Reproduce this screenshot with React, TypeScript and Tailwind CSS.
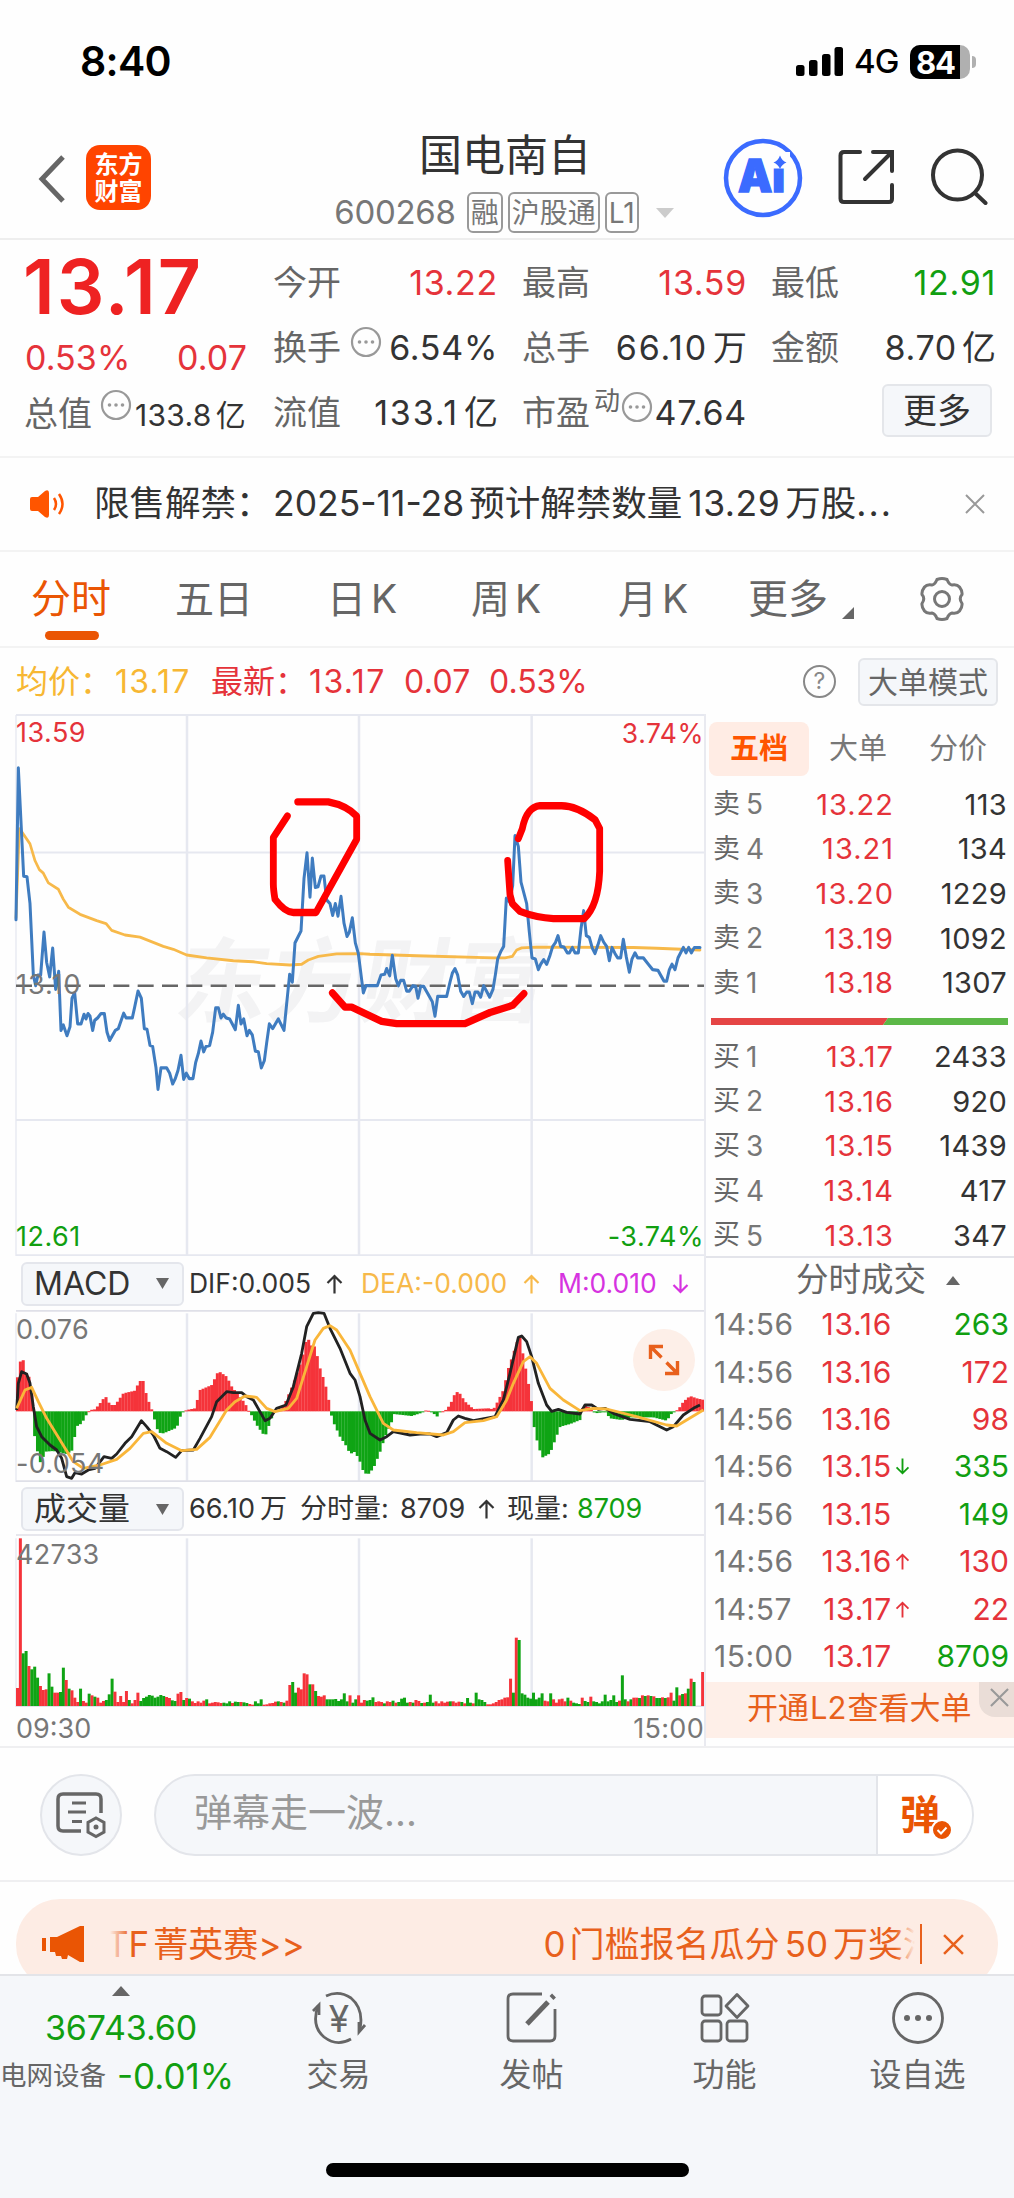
import React from "react";
import clsx from "clsx";

const RED = "#f5333a";
const GREEN = "#0fa414";

// [label, price, volume]
const sells = [
  ["5", "13.22", "113"],
  ["4", "13.21", "134"],
  ["3", "13.20", "1229"],
  ["2", "13.19", "1092"],
  ["1", "13.18", "1307"],
];

const buys = [
  ["1", "13.17", "2433"],
  ["2", "13.16", "920"],
  ["3", "13.15", "1439"],
  ["4", "13.14", "417"],
  ["5", "13.13", "347"],
];

const trades = [
  { time: "14:56", price: "13.16", vol: "263", up: false },
  { time: "14:56", price: "13.16", vol: "172", up: true },
  { time: "14:56", price: "13.16", vol: "98", up: true },
  { time: "14:56", price: "13.15", vol: "335", up: false, dir: "down" },
  { time: "14:56", price: "13.15", vol: "149", up: false },
  { time: "14:56", price: "13.16", vol: "130", up: true, dir: "up" },
  { time: "14:57", price: "13.17", vol: "22", up: true, dir: "up" },
  { time: "15:00", price: "13.17", vol: "8709", up: false },
];

const priceLine =
  "48,615 55,190 71,493 81,495 90,570 100,770 107,800 114,770 122,770 132,650 140,735 149,775 158,695 167,810 176,760 183,925 190,910 201,940 210,915 216,835 224,820 233,907 243,907 252,880 258,893 264,878 270,885 278,925 284,897 293,890 303,878 313,878 321,930 329,953 346,925 355,920 371,877 378,890 397,890 404,860 414,815 424,835 433,920 441,922 450,967 458,970 468,1030 474,1090 483,1030 500,1030 509,1045 518,1075 526,1060 534,1037 543,995 551,1062 559,1045 568,1060 579,1060 587,1015 595,990 603,955 611,985 618,970 629,967 638,930 647,862 655,862 663,890 670,880 678,890 689,893 706,923 715,855 723,907 731,893 741,940 748,925 757,938 766,983 775,985 784,1030 793,1010 800,960 808,907 818,920 835,893 852,925 860,850 869,768 877,790 885,680 903,647 912,500 921,428 930,552 937,443 946,525 954,523 963,493 972,493 980,560 990,570 998,603 1006,570 1014,605 1023,550 1032,625 1041,662 1048,650 1057,610 1066,680 1075,710 1090,820 1098,800 1132,800 1143,770 1154,768 1160,752 1169,772 1177,715 1187,780 1195,800 1202,785 1211,785 1220,815 1228,815 1239,800 1247,802 1254,835 1262,802 1271,802 1288,830 1297,845 1305,885 1313,830 1340,830 1350,790 1357,765 1365,752 1373,770 1382,815 1391,830 1400,818 1408,818 1417,850 1425,818 1434,818 1442,832 1451,800 1469,832 1479,810 1486,770 1493,725 1502,705 1511,690 1519,555 1528,565 1538,520 1545,380 1555,410 1563,510 1580,570 1588,650 1596,722 1606,725 1615,755 1622,740 1631,727 1640,740 1650,715 1658,690 1666,680 1674,660 1682,690 1692,692 1702,708 1708,708 1717,693 1725,708 1735,708 1743,640 1751,590 1759,660 1768,665 1777,695 1785,710 1794,685 1802,660 1811,678 1820,690 1828,730 1836,693 1845,710 1853,722 1862,722 1870,670 1879,720 1888,762 1896,725 1905,708 1913,722 1930,722 1945,740 1958,755 1974,757 1992,787 2000,787 2008,755 2016,740 2025,755 2034,722 2050,693 2058,708 2066,693 2074,708 2083,693 2100,693";

const avgLine =
  "48,610 58,360 66,370 90,403 105,450 118,475 130,485 145,512 175,530 190,558 205,580 240,600 290,618 318,626 335,645 375,658 420,664 490,690 520,698 560,714 620,722 700,730 760,733 800,738 870,742 905,740 925,728 955,718 1010,711 1080,710 1110,712 1250,716 1480,722 1515,722 1537,718 1550,700 1565,694 1610,692 1900,693 1970,695 2100,700";

const difLine =
  "50,480 55,400 65,365 80,372 90,400 100,470 110,530 125,560 150,585 170,600 185,625 200,680 215,685 225,668 245,672 265,660 285,655 312,620 335,625 350,612 375,580 395,560 424,512 440,530 460,555 480,595 500,605 527,622 545,602 580,600 600,565 635,500 650,455 680,425 700,428 725,428 740,440 760,450 795,512 810,505 830,475 858,465 880,410 905,310 920,230 940,190 955,188 972,190 990,235 1020,295 1050,370 1065,390 1080,440 1095,510 1110,550 1140,570 1160,560 1180,545 1230,555 1260,552 1290,552 1310,560 1340,548 1360,510 1375,498 1395,505 1420,512 1485,500 1510,450 1530,370 1555,262 1565,258 1580,275 1595,320 1615,400 1640,465 1655,484 1675,478 1700,487 1740,492 1755,465 1775,465 1795,478 1815,475 1840,490 1890,508 1950,515 2000,540 2020,530 2050,495 2080,475 2100,465";

const deaLine =
  "50,475 75,420 95,412 115,455 140,505 180,570 220,635 250,655 300,645 350,628 390,595 430,550 455,545 500,580 545,602 590,598 630,562 680,480 705,455 735,438 770,442 800,475 825,485 865,475 890,445 920,350 945,270 970,235 990,227 1010,240 1050,300 1080,370 1110,440 1150,520 1180,540 1250,548 1330,555 1360,545 1395,518 1450,512 1490,500 1520,450 1540,400 1570,335 1590,320 1610,340 1650,415 1690,450 1740,482 1780,475 1820,477 1910,500 2000,525 2030,528 2060,510 2110,480";

const macdShape =
  "48,440 55,345 68,322 75,365 90,385 97,450 99,484 100,540 110,590 118,640 126,630 135,605 160,603 200,612 218,600 228,530 245,520 262,488 270,480 285,478 300,460 316,438 330,465 345,465 370,430 405,422 418,393 430,393 440,440 454,475 458,490 475,548 490,550 530,533 543,492 552,484 560,480 585,475 600,420 635,405 655,363 680,380 695,410 735,460 744,480 750,487 770,525 795,560 812,510 825,484 850,470 880,400 905,330 922,255 930,285 945,290 960,355 975,400 985,445 991,480 997,510 1020,560 1040,590 1050,612 1065,605 1080,635 1092,670 1105,672 1120,655 1140,605 1155,560 1175,515 1180,492 1235,498 1260,490 1272,484 1280,480 1290,484 1300,490 1312,500 1320,486 1335,482 1350,465 1365,430 1375,424 1395,455 1420,477 1465,475 1480,478 1490,460 1510,420 1525,355 1540,310 1558,255 1570,320 1585,400 1595,460 1597,484 1600,520 1615,590 1628,622 1650,610 1665,570 1680,530 1710,522 1740,510 1744,486 1750,468 1762,468 1775,480 1785,490 1800,488 1815,484 1830,505 1865,510 1890,502 1960,502 2000,512 2015,490 2035,478 2050,455 2070,438 2090,445 2112,450";

const volBars =
  "r54 r503 g158 g165 r120 g110 g118 g85 r60 r48 r50 g98 g58 r40 r40 g42 g115 r78 g52 r47 r25 r12 g52 r15 r10 g37 r32 g28 r25 r10 r15 g18 g35 g82 r43 r12 r30 r12 r45 g18 r8 r18 r40 g15 g24 g28 g33 g31 g25 g28 g33 g30 r27 r24 g17 g15 r37 r42 g18 r24 g22 r14 r9 r14 r10 r16 g20 r8 r10 r12 r11 r9 g10 g8 g14 r9 g13 g12 r12 g11 g9 r6 r4 g14 g8 g20 r4 r5 r8 r9 r13 g14 r12 g10 r16 r63 g72 g40 r55 r50 r98 r95 g65 r65 g45 r30 r28 r32 g20 g20 g20 g21 g15 g20 g38 g14 r32 g10 g20 r32 r10 r18 g16 g18 g26 r12 r14 r12 g8 r14 r12 g16 r10 g12 g22 g25 g10 r12 g10 r18 r15 g9 r10 g12 g34 g10 r14 r8 r14 r10 r13 g14 r14 r10 r13 g12 r8 g24 g10 r8 g40 g20 g18 g12 r5 r5 r8 r12 r18 r20 r25 r26 r82 g40 r205 g198 g38 g34 g25 g22 g40 g20 g25 g38 r16 r14 g38 r20 r10 r20 r22 r14 g25 r16 g10 g8 g6 r25 g15 g12 r28 g14 g12 g8 g14 g34 g14 g18 g32 g12 r16 g92 g20 r14 g20 r25 r25 g24 r32 g30 r32 g30 r29 g24 g24 r26 g24 r26 r40 g16 g56 r32 g36 r38 g52 r82 g72 r0 r0 r102".split(
    " "
  );

// linear interpolation over a list of "x,y" pairs
const parse = (s: string) => s.split(" ").map((p) => p.split(",").map(Number));
const macdPts = parse(macdShape);
const valueAt = (x: number) => {
  for (let i = 1; i < macdPts.length; i++) {
    const [x0, y0] = macdPts[i - 1];
    const [x1, y1] = macdPts[i];
    if (x <= x1) return y0 + ((y1 - y0) * (x - x0)) / (x1 - x0);
  }
  return 484;
};

const STEP = 2064 / 241;
const VOL_STEP = 2064 / volBars.length;

const Triangle = ({ className, d = "M0 0H10L5 10Z" }: { className: string; d?: string }) => (
  <svg viewBox="0 0 10 10" preserveAspectRatio="none" className={className} fill="currentColor">
    <path d={d} />
  </svg>
);

const Arrow = ({ dir, className }: { dir?: string; className?: string }) => (
  <svg
    viewBox="0 0 16 20"
    className={clsx("shrink-0", dir === "down" && "rotate-180", className)}
    fill="none"
    stroke="currentColor"
    strokeWidth="2.2"
  >
    <path d="M8 19.5V2M1 9l7-7 7 7" />
  </svg>
);

const Dots = ({ className }: { className?: string }) => (
  <svg viewBox="0 0 32 32" className={clsx("h-8 w-8 shrink-0 text-[#999]", className)}>
    <circle cx="16" cy="16" r="14" fill="none" stroke="currentColor" strokeWidth="2.2" />
    <circle cx="9.5" cy="16" r="1.8" fill="currentColor" />
    <circle cx="16" cy="16" r="1.8" fill="currentColor" />
    <circle cx="22.5" cy="16" r="1.8" fill="currentColor" />
  </svg>
);

const Cross = ({ className, w = 2 }: { className: string; w?: number }) => (
  <svg viewBox="0 0 20 20" className={className} fill="none" stroke="currentColor" strokeWidth={w}>
    <path d="M1 1l18 18M19 1L1 19" />
  </svg>
);

const StatusBar = () => (
  <div className="flex h-[124px] items-center justify-between pl-[80px] pr-[38px] text-black">
    <span className="text-[41px] font-semibold tracking-[-0.7px]">8:40</span>
    <div className="flex items-center">
      <svg width="48" height="30" viewBox="0 0 48 30">
        <rect x="0" y="18" width="8.5" height="11" rx="2.5" />
        <rect x="13" y="13" width="8.5" height="16" rx="2.5" />
        <rect x="26" y="7" width="8.5" height="22" rx="2.5" />
        <rect x="38.5" y="0" width="8.5" height="29" rx="2.5" />
      </svg>
      <span className="ml-[10px] w-[45px] text-[33px] font-medium tracking-[-0.8px]">4G</span>
      <div className="ml-[11px] flex h-[34px] w-[60px] rounded-[10px] bg-[#b0b0b0]">
        <div className="flex w-[50px] items-center justify-center rounded-l-[10px] bg-black pl-px text-[31px] font-bold leading-none tracking-[-1px] text-white">
          84
        </div>
      </div>
      <div className="ml-[2px] h-3 w-[4px] rounded-r-full bg-[#b0b0b0]" />
    </div>
  </div>
);

const Tag = ({ children }: { children: React.ReactNode }) => (
  <span className="flex h-[41px] items-center rounded-md border-2 border-[#999] px-[2px] text-[28px] text-[#777]">
    {children}
  </span>
);

const Header = () => (
  <div className="flex h-[116px] border-b-2 border-[#eee]">
    <div className="flex w-[330px] items-start pl-[37px] pt-[21px]">
      <svg width="28" height="48" viewBox="0 0 28 48" className="mt-[10px]" fill="none" stroke="#666" strokeWidth="5">
        <path d="M26 2L5 24l21 22" />
      </svg>
      <div className="ml-[21px] flex h-[65px] w-[65px] flex-col items-center justify-center rounded-[14px] bg-[#ff4400] text-[24px] font-bold leading-[27px] text-white">
        <span>东方</span>
        <span>财富</span>
      </div>
    </div>
    <div className="flex w-[350px] flex-col items-center">
      <div className="mt-[8px] text-[43px] leading-[46px] text-[#333]">国电南自</div>
      <div className="mt-[10px] -ml-[2px] flex items-center gap-[5px]">
        <span className="mr-[6px] text-[33px] tracking-[-0.3px] text-[#777]">600268</span>
        <Tag>融</Tag>
        <Tag>沪股通</Tag>
        <Tag>L1</Tag>
        <Triangle className="ml-3 h-[10px] w-[18px] text-[#ccc]" />
      </div>
    </div>
    <div className="ml-[43px] flex items-start pt-[14px]">
      <svg width="80" height="80" viewBox="0 0 80 80" fill="#3b6bff">
        <circle cx="40" cy="40" r="37" fill="none" stroke="#3b6bff" strokeWidth="4.5" />
        <text
          x="15"
          y="54"
          fontSize="46"
          textLength="47"
          lengthAdjust="spacingAndGlyphs"
          stroke="#3b6bff"
          strokeWidth="1.5"
          className="font-black"
        >
          Ai
        </text>
        <rect x="47" y="14" width="20" height="16.500" fill="#fefefe" />
        <path d="M57 17.500Q59 23 63.500 24.500Q59 26 57 31Q55 26 50.500 24.500Q55 23 57 17.500Z" />
      </svg>
      <svg
        width="58"
        height="58"
        viewBox="0 0 58 58"
        className="ml-[34px] mt-[10px]"
        fill="none"
        stroke="#333"
        strokeWidth="4"
        strokeLinecap="round"
      >
        <path d="M23 4H7Q3.500 4 3.500 7.500V50.500Q3.500 54 7 54H52Q55 54 55 51V37M36 4H55V23M54 5L28 31" />
      </svg>
      <svg
        width="60"
        height="60"
        viewBox="0 0 60 60"
        className="ml-[33px] mt-[10px]"
        fill="none"
        stroke="#333"
        strokeWidth="4"
        strokeLinecap="round"
      >
        <circle cx="29.500" cy="27" r="24.500" />
        <path d="M47 45L57.500 55" />
      </svg>
    </div>
  </div>
);

type CellProps = {
  label: React.ReactNode;
  value: string;
  unit?: string;
  color?: string;
  wide?: boolean;
};

const Cell = ({ label, value, unit, color, wide }: CellProps) => (
  <div className="flex h-[65px] items-center justify-between whitespace-nowrap text-[34px]">
    <span className="-ml-[2px] flex items-center text-[#666]">{label}</span>
    <span className={clsx("-mr-px", color || "text-[#333]")}>
      <span className={wide ? "tracking-[1.8px]" : "tracking-[0.7px]"}>{value}</span>
      {unit && <span className="ml-[5px]">{unit}</span>}
    </span>
  </div>
);

const Quote = () => (
  <div className="flex h-[218px] gap-[28px] border-b-2 border-[#f3f3f3] pl-[25px] pt-[10px]">
    <div className="w-[222px]">
      <div className="-ml-[2px] flex h-[75px] items-center text-[75px] font-semibold tracking-[2px] text-[#ee2222]">
        13.17
      </div>
      <div className="flex h-[64px] items-center justify-between text-[34px] tracking-[0.1px] text-[#e5333a]">
        <span>0.53%</span>
        <span>0.07</span>
      </div>
      <div className="flex h-[48px] items-center whitespace-nowrap">
        <span className="-ml-px shrink-0 text-[34px] text-[#666]">总值</span>
        <Dots className="-mt-4 ml-[8px]" />
        <span className="ml-[3px] mt-1 text-[30px] tracking-[0.3px] text-[#333]">
          133.8<span className="ml-[4px]">亿</span>
        </span>
      </div>
    </div>
    <div className="grid w-[720px] grid-cols-[222px_222px_222px] content-start gap-x-[27px]">
      <Cell label="今开" value="13.22" color="text-[#e5333a]" />
      <Cell label="最高" value="13.59" color="text-[#e5333a]" />
      <Cell label="最低" value="12.91" color="text-[#119f11]" />
      <Cell
        label={
          <>
            换手
            <Dots className="-mt-3 ml-[9px]" />
          </>
        }
        value="6.54%"
      />
      <Cell label="总手" value="66.10" unit="万" wide />
      <Cell label="金额" value="8.70" unit="亿" />
      <Cell label="流值" value="133.1" unit="亿" wide />
      <Cell
        label={
          <>
            市盈
            <span className="-mt-6 ml-[4px] text-[26px]">动</span>
            <Dots className="-mt-3 ml-px" />
          </>
        }
        value="47.64"
      />
      <div className="flex h-[65px] items-center justify-end pr-[3px]">
        <button className="-mt-1 h-[53px] w-[110px] rounded-md border-2 border-[#e4e6ea] bg-[#f5f7fa] text-[34px] leading-none text-[#333]">
          更多
        </button>
      </div>
    </div>
  </div>
);

const Notice = () => (
  <div className="flex h-[94px] items-center border-b-2 border-[#f3f3f3] pl-[29px]">
    <svg width="38" height="30" viewBox="0 0 38 30" fill="#ff5500">
      <path d="M3 8H9L16 2Q20 0 20 4V26Q20 30 16 28L9 22H3Q1 22 1 20V10Q1 8 3 8Z" />
      <path d="M25 9Q29 15 25 21M30 5Q37 15 30 25" fill="none" stroke="#ff5500" strokeWidth="2.500" />
    </svg>
    <div className="ml-[27px] flex w-[801px] whitespace-nowrap text-[35.5px] text-[#333]">
      <span className="w-[179px]">限售解禁：</span>
      <span>2025-11-28</span>
      <span className="ml-[5px]">预计解禁数量</span>
      <span className="ml-[6px] tracking-[0.5px]">13.29</span>
      <span className="ml-[5px]">万股</span>
      <span className="tracking-[2px]">...</span>
    </div>
    <Cross className="ml-[70px] h-5 w-5 text-[#999]" />
  </div>
);

const Tabs = () => (
  <div className="flex h-[96px] items-center border-b-2 border-[#f3f3f3] text-[39px] text-[#666]">
    <div className="relative w-[145px] pl-[31px] text-[40px] text-[#ea5504]">
      分时
      <div className="absolute -bottom-[11px] left-[45px] h-[9px] w-[54px] rounded-full bg-[#ea5504]" />
    </div>
    <div className="w-[152px] pl-[30px]">五日</div>
    <div className="w-[142px] pl-[30px]">
      日<span className="ml-[5px]">K</span>
    </div>
    <div className="w-[148px] pl-[32px]">
      周<span className="ml-[5px]">K</span>
    </div>
    <div className="w-[130px] pl-[31px]">
      月<span className="ml-[5px]">K</span>
    </div>
    <div className="flex w-[202px] items-center pl-[31px] text-[40px]">
      更多
      <Triangle className="ml-[14px] mt-7 h-3 w-3" d="M10 0V10H0Z" />
    </div>
    <svg width="46" height="46" viewBox="0 0 46 46" fill="none" stroke="#777" strokeWidth="3">
      <path d="M18 3.500Q23 1.500 28 3.500Q30 8.500 33 9Q38 8 40.500 11Q43.500 15 43 18.500Q39.500 22.500 43 27.500Q43.500 31 40.500 35Q38 38 33 37Q30 37.500 28 42.500Q23 44.500 18 42.500Q16 37.500 13 37Q8 38 5.500 35Q2.500 31 3 27.500Q6.500 22.500 3 18.500Q2.500 15 5.500 11Q8 8 13 9Q16 8.500 18 3.500Z" />
      <circle cx="23" cy="23" r="7.500" />
    </svg>
  </div>
);

const InfoLine = () => (
  <div className="flex h-[66px] items-center whitespace-nowrap pl-4 pr-4 pt-px text-[32px] text-[#e5333a]">
    <span className="w-[99px] text-[#f7b733]">均价：</span>
    <span className="w-[96px] tracking-[1.2px] text-[#f7b733]">13.17</span>
    <span className="w-[98px]">最新：</span>
    <span className="w-[95px] tracking-[1.4px]">13.17</span>
    <span className="w-[85px] tracking-[0.3px]">0.07</span>
    <span>0.53%</span>
    <div className="ml-auto mr-[22px] flex h-[33px] w-[33px] items-center justify-center rounded-full border-2 border-[#888] text-[23px] text-[#888]">
      ?
    </div>
    <button className="h-[48px] w-[140px] rounded-md border-2 border-[#e4e6ea] bg-[#f5f7fa] text-[30px] leading-none text-[#666]">
      大单模式
    </button>
  </div>
);

const Grid = ({ top, bottom }: { top: number; bottom: number }) => (
  <g stroke="#e6e8f0" fill="none">
    {[561, 1077, 1595].map((x) => (
      <path key={x} d={`M${x} ${top}V${bottom}`} strokeWidth="7.5" />
    ))}
    <path d={`M48 ${top}V${bottom}`} strokeWidth="4" />
  </g>
);

const PriceChart = () => (
  <div className="relative h-[542px] text-[27px] tracking-[0.5px]">
    <div className="absolute left-[178px] top-[222px] -skew-x-10 text-[92px] font-bold leading-none text-[#f3f3f4]">
      东方财富
    </div>
    <svg viewBox="0 39.2 2112 1517.6" preserveAspectRatio="none" className="relative h-full w-full" fill="none">
      <Grid top={42} bottom={1557} />
      <path d="M48 427H2112M48 1176H2112" stroke="#e6e8f0" strokeWidth="6" />
      <path d="M48 42H2112M48 1555H2112" stroke="#e6e8f0" strokeWidth="6" />
      <path d="M48 800H2112" stroke="#666" strokeWidth="7" strokeDasharray="48 25" />
      <g strokeLinejoin="round" strokeLinecap="round">
        <polyline points={avgLine} stroke="#f7b94a" strokeWidth="8" />
        <polyline points={priceLine} stroke="#3f7cc0" strokeWidth="9" />
        <g stroke="#ff0000" strokeWidth="20.500">
          <path d="M893 285H985Q1040 295 1070 325V390L948 595H880Q855 595 825 558Q820 530 820 515V385L862 325" />
          <path d="M1555 388L1567 360Q1580 300 1620 296H1685Q1730 296 1785 335L1799 360V480Q1795 575 1753 612H1660Q1610 610 1560 592L1537 570L1530 545L1523 450" />
          <path d="M997 820L1035 860H1055Q1100 880 1145 900L1190 906H1395L1470 875L1538 855L1572 822" />
        </g>
      </g>
    </svg>
    <span className="absolute left-4 top-0 leading-[38px] text-[#e5333a]">13.59</span>
    <span className="absolute right-0 top-0 text-[26.5px] leading-[38px] text-[#e5333a]">3.74%</span>
    <span className="absolute left-4 top-[251px] tracking-[1px] text-[#777]">13.10</span>
    <span className="absolute -bottom-px left-4 text-[#119f11]">12.61</span>
    <span className="absolute -bottom-px right-0 text-[#119f11]">-3.74%</span>
  </div>
);

const SelectBox = ({ children }: { children: React.ReactNode }) => (
  <div className="flex h-[44px] w-[163px] shrink-0 items-center justify-between rounded-md border-2 border-[#e4e6ec] bg-[#f5f7fa] pl-[11px] pr-[13px] text-[32px] leading-none text-[#333]">
    {children}
    <Triangle className="h-[11px] w-[13px] text-[#666]" />
  </div>
);

const MacdChart = () => (
  <>
    <div className="flex h-[54px] items-center whitespace-nowrap pl-[21px] pt-px text-[26.5px] text-[#333]">
      <SelectBox>MACD</SelectBox>
      <span className="ml-[5px] w-[137px]">DIF:0.005</span>
      <Arrow className="h-[20px] w-[17px]" />
      <span className="ml-[18px] w-[162px] text-[#f7b94a]">DEA:-0.000</span>
      <Arrow className="h-[20px] w-[17px] text-[#f7b94a]" />
      <span className="ml-[18px] w-[114px] text-[#d633e0]">M:0.010</span>
      <Arrow dir="down" className="h-[20px] w-[17px] text-[#d633e0]" />
    </div>
    <div className="relative h-[172px] text-[27px] tracking-[0.3px] text-[#777]">
      <svg viewBox="0 180 2112 516" preserveAspectRatio="none" className="h-full w-full" fill="none">
        <Grid top={190} bottom={696} />
        <path d="M48 182H2112M48 694H2112" stroke="#dfe0e8" strokeWidth="6" />
        {Array.from({ length: 241 }, (_, i) => {
          const x = 48 + i * STEP;
          const y = valueAt(x + STEP / 2);
          const up = y < 484;
          return (
            <rect
              key={i}
              x={x}
              y={up ? y : 484}
              width={STEP + 0.6}
              height={Math.max(Math.abs(y - 484), 3)}
              fill={up ? RED : GREEN}
            />
          );
        })}
        <polyline points={difLine} stroke="#222" strokeWidth="8.5" strokeLinejoin="round" />
        <polyline points={deaLine} stroke="#f9b63a" strokeWidth="8.5" strokeLinejoin="round" />
      </svg>
      <span className="absolute left-4 top-0">0.076</span>
      <span className="absolute bottom-[-2px] left-4">-0.054</span>
      <div className="absolute right-[9px] top-[19px] flex h-[62px] w-[62px] items-center justify-center rounded-full bg-[#fdefe8]">
        <svg width="34" height="34" viewBox="0 0 34 34" fill="none" stroke="#e8601c" strokeWidth="3.4">
          <path d="M3.500 16V3.500H16M3.500 3.500L14.500 14.500M30.500 18V30.500H18M30.500 30.500L19.500 19.500" />
        </svg>
      </div>
    </div>
  </>
);

const VolumeChart = () => (
  <>
    <div className="flex h-[52px] items-center whitespace-nowrap pl-[21px] pt-[2px] text-[27px] text-[#333]">
      <SelectBox>成交量</SelectBox>
      <span className="ml-[5px] w-[111px]">
        66.10<span className="ml-[5px]">万</span>
      </span>
      <span className="w-[100px]">分时量:</span>
      <span className="w-[78px]">8709</span>
      <Arrow className="h-[20px] w-[17px]" />
      <span className="ml-[12px] w-[70px]">现量:</span>
      <span className="text-[#119f11]">8709</span>
    </div>
    <div className="relative h-[173px] text-[27px] tracking-[0.3px] text-[#777]">
      <svg viewBox="0 852 2112 519" preserveAspectRatio="none" className="h-full w-full" fill="none">
        <Grid top={865} bottom={1371} />
        <path d="M48 855H2112M48 1369H2112" stroke="#dfe0e8" strokeWidth="5" />
        {volBars.map((bar, i) => {
          const h = Number(bar.slice(1));
          return (
            <rect
              key={i}
              x={48 + i * VOL_STEP}
              y={1368 - h}
              width={VOL_STEP + 0.4}
              height={h}
              fill={bar[0] === "r" ? RED : GREEN}
            />
          );
        })}
      </svg>
      <span className="absolute left-4 top-px">42733</span>
    </div>
    <div className="flex h-[39px] items-center justify-between pl-4 pt-[6px] text-[27px] text-[#777]">
      <span>09:30</span>
      <span className="tracking-[0.3px]">15:00</span>
    </div>
  </>
);

const Level = ({ side, row }: { side: string; row: string[] }) => (
  <div className="flex h-[44.7px] items-center text-[29px]">
    <span className="w-[33px] text-[27px] text-[#666]">{side}</span>
    <span className="text-[28px] text-[#777]">{row[0]}</span>
    <span className="ml-auto tracking-[1px] text-[#e5333a]">{row[1]}</span>
    <span className="w-[113px] text-right tracking-[0.3px] text-[#333]">{row[2]}</span>
  </div>
);

const OrderBook = () => (
  <div className="w-[310px] border-l-2 border-[#e9eaf0]">
    <div className="flex h-[64px] items-center pl-[3px] pt-[5px] text-[29px] text-[#777]">
      <div className="flex h-[54px] w-[100px] items-center justify-center rounded-lg bg-[#ffece4] font-bold text-[#ff5500]">
        五档
      </div>
      <span className="ml-[20px]">大单</span>
      <span className="ml-[42px]">分价</span>
    </div>
    <div className="h-[480px] border-b-2 border-[#e3e4ea] pl-[7px] pr-[7px] pt-[4px]">
      {sells.map((row) => (
        <Level key={row[0]} side="卖" row={row} />
      ))}
      <div className="-ml-[2px] -mr-[2px] mb-[9px] mt-[13px]">
        <svg width="297" height="7" viewBox="0 0 297 7">
          <path d="M0 0H177L172 7H0Z" fill="#e54545" />
          <path d="M177 0H297V7H172Z" fill="#5cb848" />
        </svg>
      </div>
      {buys.map((row) => (
        <Level key={row[0]} side="买" row={row} />
      ))}
    </div>
    <div className="flex h-[43px] items-center pl-[90px] pt-[2px] text-[32.5px] text-[#666]">
      分时成交
      <Triangle className="ml-[20px] h-[9px] w-[14px]" d="M5 0L10 10H0Z" />
    </div>
    <div className="h-[381px] pl-[8px] pr-[5px]">
      {trades.map((t, i) => (
        <div key={i} className="flex h-[47.4px] items-center text-[30px]">
          <span className="w-[100px] tracking-[0.5px] text-[#777]">{t.time}</span>
          <span className="w-[78px] whitespace-nowrap text-right tracking-[0.7px] text-[#e5333a]">{t.price}</span>
          <span className="flex w-[18px] justify-end">
            {t.dir && (
              <Arrow
                dir={t.dir}
                className={clsx("h-[17px] w-[15px]", t.dir === "up" ? "text-[#e5333a]" : "text-[#119f11]")}
              />
            )}
          </span>
          <span className={clsx("ml-auto", t.up ? "text-[#e5333a]" : "text-[#119f11]")}>{t.vol}</span>
        </div>
      ))}
    </div>
    <div className="relative flex h-[56px] items-center whitespace-nowrap bg-[#feefe8] pb-1 pl-[41px] text-[31px] text-[#e8601c]">
      开通<span className="mx-px">L2</span>查看大单
      <div className="absolute right-0 top-0 flex h-[35px] w-[35px] items-center justify-center rounded-bl-2xl bg-[#eaddd7]">
        <Cross className="mb-1 ml-[6px] h-[19px] w-[19px] text-[#999]" w={2.2} />
      </div>
    </div>
  </div>
);

const CommentBar = () => (
  <div className="flex h-[136px] items-center gap-[32px] border-y-2 border-[#efeff1] pl-[40px] pt-[2px]">
    <div className="flex h-[82px] w-[82px] items-center justify-center rounded-full border-2 border-[#e3e5ea] bg-[#f5f7fa]">
      <svg width="52" height="48" viewBox="0 0 52 48" fill="none" stroke="#666" strokeWidth="3">
        <path d="M26 40H8Q3 40 3 35V8Q3 3 8 3H41Q46 3 46 8V22" strokeWidth="3.500" />
        <path d="M17 12H31M13 21H31M17 30.500H27" />
        <path d="M41 27L49 31.500V41L41 45.500L33 41V31.500Z" />
        <circle cx="41" cy="36" r="2.500" fill="#666" stroke="none" />
      </svg>
    </div>
    <div className="flex h-[82px] w-[820px] overflow-hidden rounded-full border-2 border-[#e3e5ea] bg-[#f5f7fa]">
      <div className="flex flex-1 items-center pb-[6px] pl-[38px] text-[38px] text-[#999]">弹幕走一波...</div>
      <div className="relative flex w-[96px] items-center border-l-2 border-[#e3e5ea] bg-white pl-[22px] text-[40px] font-bold text-[#ea5504]">
        弹
        <svg width="22" height="22" viewBox="0 0 22 22" className="absolute left-[53px] top-[43px]">
          <circle cx="11" cy="11" r="10" fill="#ea5504" stroke="#fff" strokeWidth="2" />
          <path d="M6.500 11l3.500 3.500 5.500-6" fill="none" stroke="#fff" strokeWidth="2" />
        </svg>
      </div>
    </div>
  </div>
);

const Banner = () => (
  <div className="h-[92px] overflow-hidden px-4 pt-[17px]">
    <div className="flex h-[90px] items-center rounded-[44px] bg-[#fdece4] pl-[26px] text-[35px] text-[#e8601c]">
      <svg width="43" height="36" viewBox="0 0 43 36" fill="#ea5504">
        <path d="M0 12H4V25H0ZM8 11H15L38 0H42V36H38L26 29L25 33H20L19 30H14L13 26H8Z" />
      </svg>
      <div className="relative ml-[25px] flex w-[805px] justify-between overflow-hidden whitespace-nowrap">
        <span className="-ml-[4px]">
          TF<span className="ml-[4px]">菁英赛</span>&gt;&gt;
        </span>
        <span className="-mr-[23px]">
          0<span className="ml-[4px]">门槛报名瓜分</span>
          <span className="mx-[5px]">50</span>万奖池
        </span>
        <div className="absolute inset-y-0 left-0 w-5 bg-linear-to-r from-[#fdece4] to-[#fdece4]/0" />
        <div className="absolute inset-y-0 right-0 w-5 bg-linear-to-l from-[#fdece4] to-[#fdece4]/0" />
      </div>
      <div className="ml-[5px] h-[40px] w-[2px] bg-[#e8601c]" />
      <Cross className="ml-[21px] h-[21px] w-[21px]" w={2.4} />
    </div>
  </div>
);

const navItems = [
  {
    name: "交易",
    icon: (
      <>
        <path d="M17 5Q30 -1 42 7Q55 18 51 38M9 15Q2 35 15 46Q28 56 42 48" />
        <path d="M4 20L10 14V24M56 34L50 41V31" />
        <text x="30" y="41" fontSize="37" textAnchor="middle" fill="#666" stroke="none">
          ¥
        </text>
      </>
    ),
  },
  {
    name: "发帖",
    icon: (
      <>
        <path d="M40 3H11Q6 3 6 8V45Q6 50 11 50H48Q53 50 53 45V18" />
        <path d="M25 33L46 11" strokeWidth="5" />
        <path d="M49.500 7L52 4.500" strokeWidth="5.500" />
      </>
    ),
  },
  {
    name: "功能",
    icon: (
      <>
        <rect x="7" y="5" width="19" height="19" rx="3" />
        <rect x="7" y="30" width="19" height="20" rx="3" />
        <rect x="32" y="30" width="20" height="20" rx="3" />
        <path d="M42 3.500L53 15L42 26.500L31 15Z" strokeLinejoin="round" />
      </>
    ),
  },
  {
    name: "设自选",
    icon: (
      <>
        <circle cx="30" cy="27" r="24.500" />
        <g fill="#666" stroke="none">
          <circle cx="19" cy="27" r="3" />
          <circle cx="30" cy="27" r="3" />
          <circle cx="41" cy="27" r="3" />
        </g>
      </>
    ),
  },
];

const BottomBar = () => (
  <div className="relative h-[224px] border-t-2 border-[#e3e4e8] bg-[#f5f7fa]">
    <div className="flex">
      <div className="flex w-[242px] flex-col items-center">
        <Triangle className="mt-[10px] h-[10px] w-[18px] text-[#666]" d="M5 0L10 10H0Z" />
        <span className="mt-[13px] text-[34px] leading-[38px] tracking-[-0.1px] text-[#119f11]">36743.60</span>
        <div className="mt-[8px] flex h-[42px] w-full items-center whitespace-nowrap">
          <span className="text-[26.5px] text-[#666]">电网设备</span>
          <span className="ml-[11px] text-[35px] text-[#119f11]">-0.01%</span>
        </div>
      </div>
      <div className="flex pt-[15px]">
        {navItems.map((item) => (
          <div key={item.name} className="flex w-[193px] flex-col items-center">
            <svg width="60" height="54" viewBox="0 0 60 54" fill="none" stroke="#666" strokeWidth="2.800">
              {item.icon}
            </svg>
            <span className="mt-[6px] text-[32px] text-[#666]">{item.name}</span>
          </div>
        ))}
      </div>
    </div>
    <div className="absolute bottom-[21px] left-[326px] h-[14px] w-[363px] rounded-full bg-black" />
  </div>
);

const App = () => {
  return (
    <div className="w-[1014px] overflow-hidden bg-[#fefefe] font-['Inter','Noto_Sans_CJK_SC',sans-serif]">
      <StatusBar />
      <Header />
      <Quote />
      <Notice />
      <Tabs />
      <InfoLine />
      <div className="flex h-[1032px]">
        <div className="w-[704px]">
          <PriceChart />
          <MacdChart />
          <VolumeChart />
        </div>
        <OrderBook />
      </div>
      <CommentBar />
      <Banner />
      <BottomBar />
    </div>
  );
};

export default App;
